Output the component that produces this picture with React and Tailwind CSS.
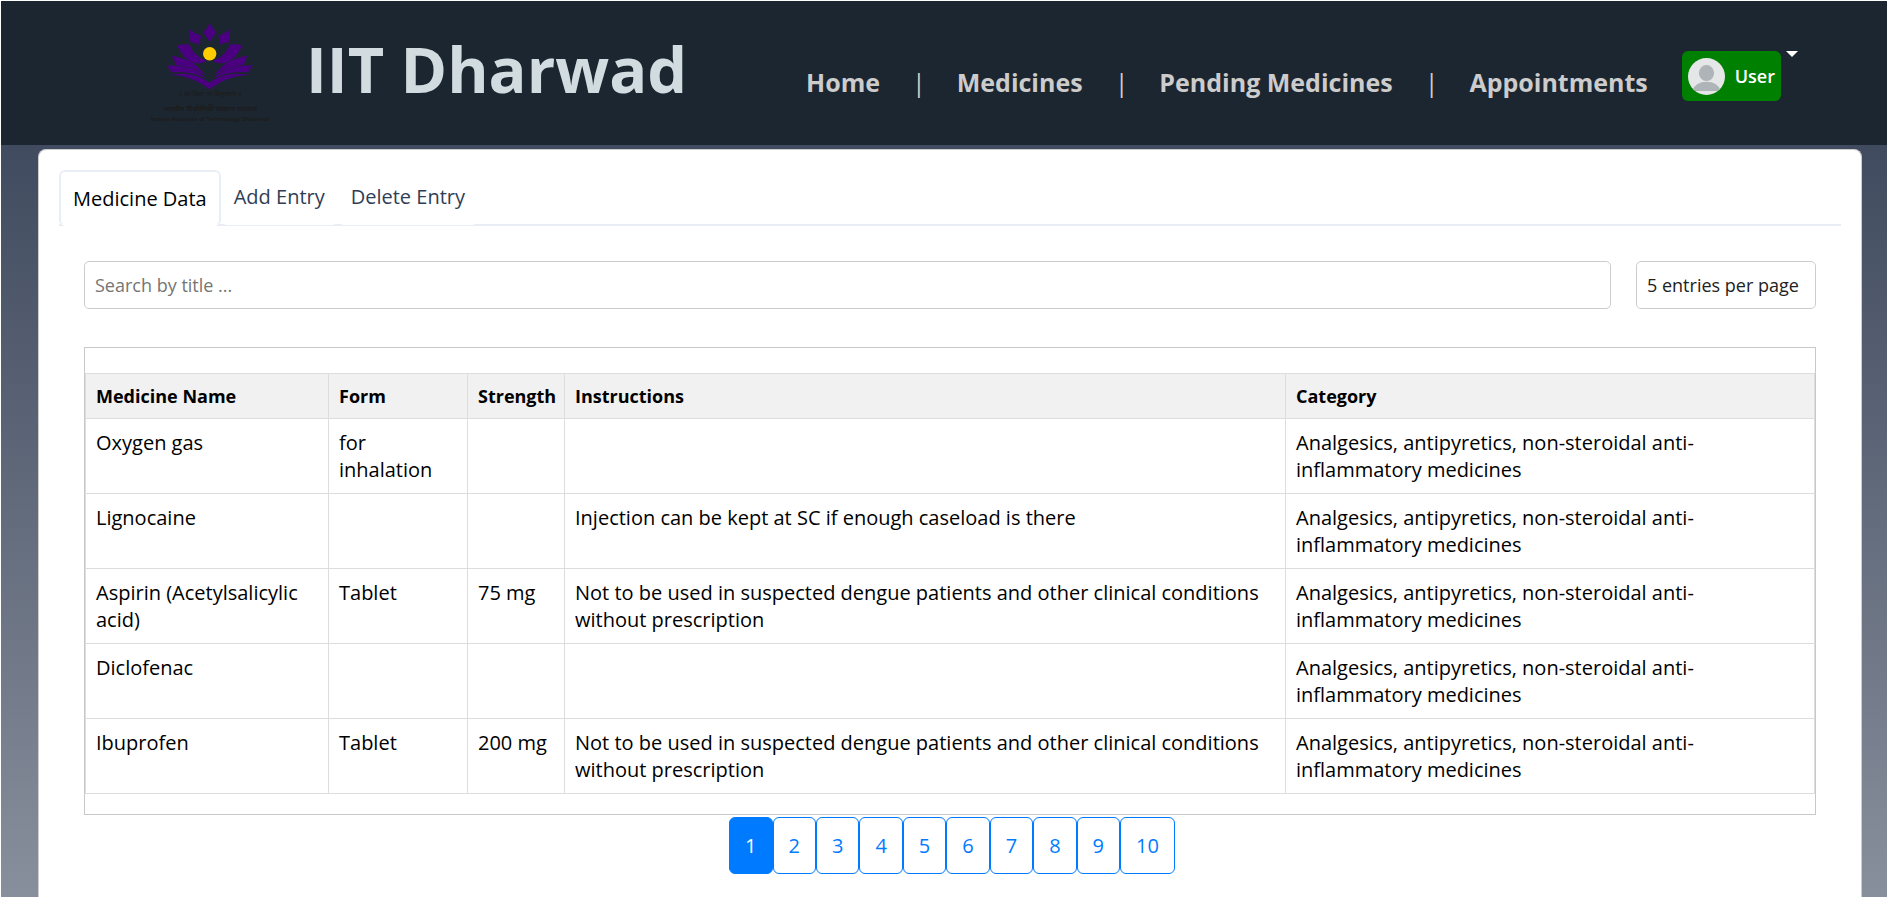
const NAV = ["Home", "Medicines", "Pending Medicines", "Appointments"];
const TABS = ["Medicine Data", "Add Entry", "Delete Entry"];
const CATEGORY = "Analgesics, antipyretics, non-steroidal anti-inflammatory medicines";
const DENGUE =
  "Not to be used in suspected dengue patients and other clinical conditions without prescription";
const COLUMNS = ["Medicine Name", "Form", "Strength", "Instructions", "Category"];
const ROWS = [
  ["Oxygen gas", "for inhalation", "", "", CATEGORY],
  ["Lignocaine", "", "", "Injection can be kept at SC if enough caseload is there", CATEGORY],
  ["Aspirin (Acetylsalicylic acid)", "Tablet", "75 mg", DENGUE, CATEGORY],
  ["Diclofenac", "", "", "", CATEGORY],
  ["Ibuprofen", "Tablet", "200 mg", DENGUE, CATEGORY],
];
const PAGES = [1, 2, 3, 4, 5, 6, 7, 8, 9, 10];

function Logo() {
  return (
    <svg viewBox="0 0 140 120" className="h-[120px] w-[140px] shrink-0" role="img" aria-label="IIT Dharwad logo">
      <g fill="#4b0082">
        <path d="M69.7 13.3 Q72.500 18.500 76.500 22.700 Q72.500 27 69.700 32 Q67 27 63 22.700 Q67 18.500 69.700 13.300 Z" />
        <path d="M49 19 Q54.500 23.500 61.300 26 Q59.500 30 60 35 Q55.500 32.300 50.300 32 Q50.500 25 49 19 Z" />
        <path d="M90.500 19 Q85 23.500 78.200 26 Q80 30 79.500 35 Q84 32.300 89.200 32 Q89 25 90.500 19 Z" />
        <path d="M37 35.500 Q43 33.800 49.300 34.300 Q53 46 67 51 Q59 55.500 50.500 51.700 Q43 47.500 37 35.500 Z" />
        <path d="M102.400 35.500 Q96.400 33.800 90.100 34.300 Q86.400 46 72.400 51 Q80.400 55.500 88.900 51.700 Q96.400 47.500 102.400 35.500 Z" />
        <path d="M31.800 45.800 Q44 48 52 52.700 Q60 57.500 65 65.300 Q52 56 35.500 54.700 Q34.500 50 31.800 45.800 Z" />
        <path d="M107.600 45.800 Q95.400 48 87.400 52.700 Q79.400 57.500 74.400 65.300 Q87.400 56 103.900 54.700 Q104.900 50 107.600 45.800 Z" />
        <path d="M26.500 55.500 Q44 55 54 59.700 Q61.500 63.300 65.500 68.300 Q51 61 31.300 62.300 Q29.500 58.500 26.500 55.500 Z" />
        <path d="M112.900 55.500 Q95.400 55 85.400 59.700 Q77.900 63.300 73.900 68.300 Q88.400 61 108.100 62.300 Q109.900 58.500 112.900 55.500 Z" />
        <path d="M30 64.800 Q54 60.500 69.300 72.800 Q85 60.500 109.500 64.800 Q86 66 69.300 79.300 Q53 66 30 64.800 Z" />
      </g>
      <circle cx="69.7" cy="43.8" r="6.7" fill="#ffcc00" />
      <g
        fill="#1c1c1c"
        textAnchor="middle"
        fontFamily="'Open Sans', 'Noto Sans', sans-serif"
        fontWeight="700"
      >
        <text x="70" y="86" fontSize="7" fontWeight="400">॥ सा विद्या या विमुक्तये ॥</text>
        <text x="70" y="101" fontSize="7">भारतीय प्रौद्योगिकी संस्थान धारवाड</text>
        <text x="70" y="111" fontSize="6">Indian Institute of Technology Dharwad</text>
      </g>
    </svg>
  );
}

function UserMenu() {
  return (
    <button type="button" className="flex items-start gap-[5px]" aria-haspopup="menu">
      <span className="flex h-[50px] items-center gap-[10px] rounded-md bg-[#008000] px-[6px] text-lg font-semibold text-white">
        <svg viewBox="0 0 38 38" className="size-[37px]" aria-hidden="true">
          <clipPath id="avatar">
            <circle cx="19" cy="19" r="19" />
          </clipPath>
          <g clipPath="url(#avatar)">
            <rect width="38" height="38" fill="#e4e6e7" />
            <ellipse cx="19" cy="15.5" rx="7.8" ry="8.2" fill="#aeb4b7" />
            <path d="M4 34 Q8 24.500 19 24.500 Q30 24.500 34 34 Z" fill="#aeb4b7" />
          </g>
        </svg>
        User
      </span>
      <svg viewBox="0 0 12 6" className="h-[6px] w-3" aria-hidden="true">
        <path d="M0 0h12L6 6z" fill="#fff" />
      </svg>
    </button>
  );
}

function Header() {
  return (
    <header className="flex h-36 items-start bg-[#1c2630] pr-[89px] pl-[139px]">
      <div className="flex items-start gap-[26px] pt-[9px]">
        <Logo />
        <h1 className="pt-4 text-[63px] leading-[86px] font-bold whitespace-nowrap text-[#d1dbe0]">IIT Dharwad</h1>
      </div>
      <nav className="ml-auto flex gap-8 pt-[64px] pr-[34px] text-[25px] leading-[34px] font-bold text-[#cccccc]">
        {NAV.map((label, i) => (
          <span key={label} className="flex gap-[31px] whitespace-nowrap">
            {i > 0 && <span className="font-normal">|</span>}
            <a href="#">{label}</a>
          </span>
        ))}
      </nav>
      <div className="pt-[50px]">
        <UserMenu />
      </div>
    </header>
  );
}

function Tabs() {
  return (
    <div role="tablist" className="flex border-b-2 border-[#e9eef4] text-xl leading-[27px]">
      {TABS.map((label, i) =>
        i === 0 ? (
          <button
            key={label}
            type="button"
            role="tab"
            aria-selected="true"
            className="-mb-[2px] h-[56px] rounded-md border-2 border-b-0 border-[#e9eef4] bg-white px-3 pb-[2px] text-black"
          >
            {label}
          </button>
        ) : (
          <button
            key={label}
            type="button"
            role="tab"
            aria-selected="false"
            className="-mb-px h-[55px] rounded-md bg-white px-[13px] pb-[2px] text-[#2f3e56]"
          >
            {label}
          </button>
        )
      )}
    </div>
  );
}

function MedicineTable() {
  return (
    <div className="border border-[#c8c8c8] pt-[25px] pb-5">
      <table className="w-full table-fixed border-collapse text-left text-xl leading-[27px] text-black">
        <colgroup>
          <col className="w-[243px]" />
          <col className="w-[139px]" />
          <col className="w-[97px]" />
          <col className="w-[41.7%]" />
          <col />
        </colgroup>
        <thead>
          <tr className="bg-[#f1f1f1] text-lg leading-[24px]">
            {COLUMNS.map((c) => (
              <th key={c} scope="col" className="border border-[#dddddd] p-[10px] font-bold">
                {c}
              </th>
            ))}
          </tr>
        </thead>
        <tbody>
          {ROWS.map((row) => (
            <tr key={row[0]}>
              {row.map((cell, i) => (
                <td key={COLUMNS[i]} className="border border-[#dddddd] p-[10px] align-top">
                  {cell}
                </td>
              ))}
            </tr>
          ))}
        </tbody>
      </table>
    </div>
  );
}

function Pagination() {
  return (
    <nav aria-label="Pages" className="mt-[2px] flex justify-center pl-1 text-xl leading-[27px]">
      {PAGES.map((n) => (
        <button
          key={n}
          type="button"
          aria-current={n === 1 ? "page" : undefined}
          className={
            n === 1
              ? "rounded-md border border-[#007bff] bg-[#007bff] px-[15px] py-[14px] text-white"
              : "rounded-md border border-[#007bff] bg-white px-[15px] py-[14px] text-[#007bff]"
          }
        >
          {n}
        </button>
      ))}
    </nav>
  );
}

export default function App() {
  return (
    <div className="flex min-h-screen flex-col bg-white p-px font-['Open_Sans','Noto_Sans',sans-serif]">
      <Header />
      <div className="flex flex-1 flex-col bg-linear-to-b from-[#414b5f] to-[#888f9c] pt-1 pr-[25px] pl-[37px]">
        <main className="flex-1 rounded-t-lg border border-b-0 border-[#cccccc] bg-white px-5 pt-5 pb-5">
          <Tabs />
          <div className="px-[25px] pt-[35px]">
            <div className="flex gap-[25px] pb-[38px] text-lg leading-[25px]">
              <input
                type="search"
                aria-label="Search by title"
                placeholder="Search by title ..."
                className="h-12 min-w-0 flex-1 rounded-[5px] border border-[#cccccc] px-[10px] text-black outline-none placeholder:text-[#757575]"
              />
              <select
                aria-label="Entries per page"
                defaultValue="5"
                className="h-12 w-[180px] appearance-none rounded-[5px] border border-[#cccccc] bg-white px-[10px] text-[#222222]"
              >
                <option value="5">5 entries per page</option>
                <option value="10">10 entries per page</option>
                <option value="20">20 entries per page</option>
              </select>
            </div>
            <MedicineTable />
            <Pagination />
          </div>
        </main>
      </div>
    </div>
  );
}
